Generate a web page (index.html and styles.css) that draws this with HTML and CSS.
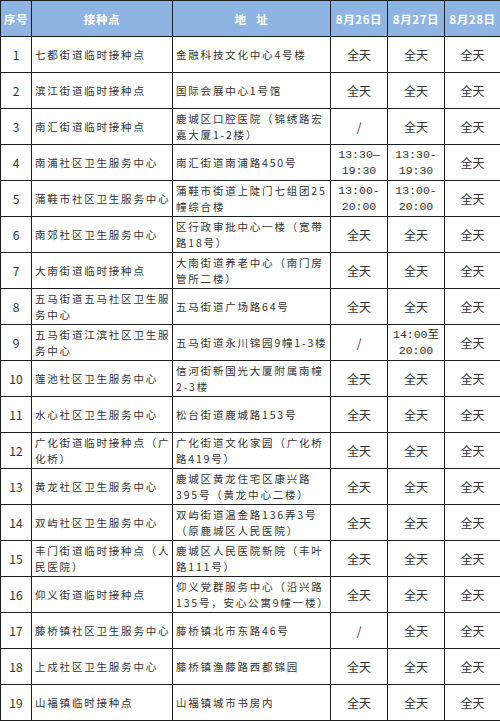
FILE: index.html
```html
<!DOCTYPE html>
<html lang="zh-CN">
<head>
<meta charset="utf-8">
<link rel="stylesheet" href="styles.css">
</head>
<body>
<table class="sched">
<colgroup>
<col class="c-no"><col class="c-name"><col class="c-addr"><col class="c-d"><col class="c-d"><col class="c-d3">
</colgroup>
<thead>
<tr class="head"><th>序号</th><th>接种点</th><th>地&nbsp;&nbsp;&nbsp;址</th><th>8月26日</th><th>8月27日</th><th>8月28日</th></tr>
</thead>
<tbody>
<tr><td class="no">1</td><td class="txt">七都街道临时接种点</td><td class="txt">金融科技文化中心4号楼</td><td class="t">全天</td><td class="t">全天</td><td class="t">全天</td></tr>
<tr><td class="no">2</td><td class="txt">滨江街道临时接种点</td><td class="txt">国际会展中心1号馆</td><td class="t">全天</td><td class="t">全天</td><td class="t">全天</td></tr>
<tr><td class="no">3</td><td class="txt">南汇街道临时接种点</td><td class="txt">鹿城区口腔医院（锦绣路宏<br>嘉大厦1-2楼）</td><td class="t">/</td><td class="t">全天</td><td class="t">全天</td></tr>
<tr><td class="no">4</td><td class="txt">南浦社区卫生服务中心</td><td class="txt">南汇街道南浦路450号</td><td class="t tm">13:30—<br>19:30</td><td class="t tm">13:30-<br>19:30</td><td class="t">全天</td></tr>
<tr><td class="no">5</td><td class="txt">蒲鞋市社区卫生服务中心</td><td class="txt">蒲鞋市街道上陡门七组团25<br>幢综合楼</td><td class="t tm">13:00-<br>20:00</td><td class="t tm">13:00-<br>20:00</td><td class="t">全天</td></tr>
<tr><td class="no">6</td><td class="txt">南郊社区卫生服务中心</td><td class="txt">区行政审批中心一楼（宽带<br>路18号）</td><td class="t">全天</td><td class="t">全天</td><td class="t">全天</td></tr>
<tr><td class="no">7</td><td class="txt">大南街道临时接种点</td><td class="txt">大南街道养老中心（南门房<br>管所二楼）</td><td class="t">全天</td><td class="t">全天</td><td class="t">全天</td></tr>
<tr><td class="no">8</td><td class="txt">五马街道五马社区卫生服<br>务中心</td><td class="txt">五马街道广场路64号</td><td class="t">全天</td><td class="t">全天</td><td class="t">全天</td></tr>
<tr><td class="no">9</td><td class="txt">五马街道江滨社区卫生服<br>务中心</td><td class="txt">五马街道永川锦园9幢1-3楼</td><td class="t">/</td><td class="t tm">14:00至<br>20:00</td><td class="t">全天</td></tr>
<tr><td class="no">10</td><td class="txt">莲池社区卫生服务中心</td><td class="txt">信河街新国光大厦附属南幢<br>2-3楼</td><td class="t">全天</td><td class="t">全天</td><td class="t">全天</td></tr>
<tr><td class="no">11</td><td class="txt">水心社区卫生服务中心</td><td class="txt">松台街道鹿城路153号</td><td class="t">全天</td><td class="t">全天</td><td class="t">全天</td></tr>
<tr><td class="no">12</td><td class="txt">广化街道临时接种点（广<br>化桥）</td><td class="txt">广化街道文化家园（广化桥<br>路419号）</td><td class="t">全天</td><td class="t">全天</td><td class="t">全天</td></tr>
<tr><td class="no">13</td><td class="txt">黄龙社区卫生服务中心</td><td class="txt">鹿城区黄龙住宅区康兴路<br>395号（黄龙中心二楼）</td><td class="t">全天</td><td class="t">全天</td><td class="t">全天</td></tr>
<tr><td class="no">14</td><td class="txt">双屿社区卫生服务中心</td><td class="txt">双屿街道温金路136弄3号<br>（原鹿城区人民医院）</td><td class="t">全天</td><td class="t">全天</td><td class="t">全天</td></tr>
<tr><td class="no">15</td><td class="txt">丰门街道临时接种点（人<br>民医院）</td><td class="txt">鹿城区人民医院新院（丰叶<br>路111号）</td><td class="t">全天</td><td class="t">全天</td><td class="t">全天</td></tr>
<tr><td class="no">16</td><td class="txt">仰义街道临时接种点</td><td class="txt">仰义党群服务中心（沿兴路<br>135号，安心公寓9幢一楼）</td><td class="t">全天</td><td class="t">全天</td><td class="t">全天</td></tr>
<tr><td class="no">17</td><td class="txt">藤桥镇社区卫生服务中心</td><td class="txt">藤桥镇北市东路46号</td><td class="t">/</td><td class="t">全天</td><td class="t">全天</td></tr>
<tr><td class="no">18</td><td class="txt">上戍社区卫生服务中心</td><td class="txt">藤桥镇渔藤路西都锦园</td><td class="t">全天</td><td class="t">全天</td><td class="t">全天</td></tr>
<tr><td class="no">19</td><td class="txt">山福镇临时接种点</td><td class="txt">山福镇城市书房内</td><td class="t">全天</td><td class="t">全天</td><td class="t">全天</td></tr>
</tbody>
</table>
</body>
</html>
```
FILE: styles.css
```css
html, body {
  margin: 0;
  padding: 0;
  background: #ffffff;
}
body {
  width: 500px;
  height: 721px;
  overflow: hidden;
  font-family: "Noto Sans CJK SC", "Noto Sans", sans-serif;
  color: #333333;
}
.sched {
  width: 500px;
  table-layout: fixed;
  border-collapse: collapse;
  font-size: 11px;
}
.c-no { width: 31px; }
.c-name { width: 141px; }
.c-addr { width: 158px; }
.c-d { width: 57px; }
.c-d3 { width: 56px; }
.sched th,
.sched td {
  border: 1.5px solid #1e1e1e;
  padding: 0;
  vertical-align: middle;
  overflow: hidden;
}
.head th {
  height: 35px;
  background: #8db4e2;
  color: #ffffff;
  font-weight: bold;
  font-size: 11.5px;
  text-align: center;
  letter-spacing: 0.6px;
}
.sched tbody tr {
  height: 36px;
}
.sched td {
  line-height: 15.5px;
}
.no {
  text-align: center;
  font-size: 12px;
}
.txt {
  text-align: left;
  padding-left: 3px !important;
  font-size: 10.5px;
  letter-spacing: 1.8px;
  white-space: nowrap;
}
.t {
  text-align: center;
  font-size: 12px;
}
.tm {
  font-family: "Liberation Mono", "Noto Sans CJK SC", monospace;
  font-size: 11.5px;
  line-height: 14px;
}
```
